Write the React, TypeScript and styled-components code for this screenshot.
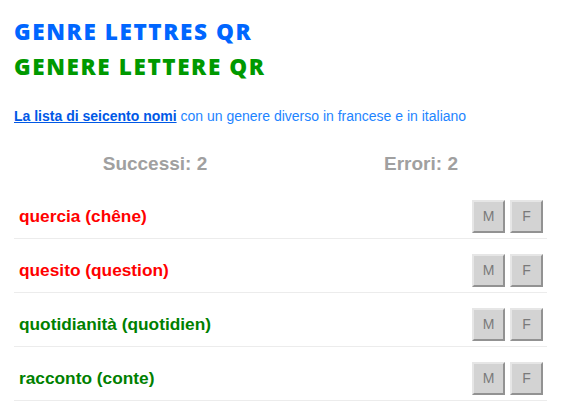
import * as React from "react";
import styled, { createGlobalStyle } from "styled-components";

type Word = { it: string; fr: string; same: boolean };

const words: Word[] = [
  { it: "quercia", fr: "chêne", same: false },
  { it: "quesito", fr: "question", same: false },
  { it: "quotidianità", fr: "quotidien", same: true },
  { it: "racconto", fr: "conte", same: true },
];

const GlobalStyle = createGlobalStyle`
  body {
    margin: 0;
    background: #ffffff;
    font-family: "Liberation Sans", Arial, sans-serif;
  }
`;

const Page = styled.div`
  padding: 14px 21px 0 14px;
`;

const Title = styled.h1<{ $green?: boolean }>`
  margin: 0;
  font-family: "Open Sans", "DejaVu Sans", sans-serif;
  font-weight: 800;
  font-size: 22.5px;
  line-height: 35px;
  letter-spacing: 1.6px;
  color: ${(p) => (p.$green ? "#009900" : "#0066ff")};
`;

const Intro = styled.p`
  margin: 24px 0 0 0;
  font-size: 14px;
  color: #1e84ff;
`;

const IntroLink = styled.a`
  color: #0058e6;
  font-weight: bold;
  text-decoration: underline;
`;

const Stats = styled.div`
  display: grid;
  grid-template-columns: 266px 266px;
  margin: 29px 0 10px 8px;
`;

const Stat = styled.div`
  text-align: center;
  font-size: 19px;
  font-weight: bold;
  color: #a0a0a0;
`;

const List = styled.ul`
  list-style: none;
  margin: 0;
  padding: 0;
`;

const Row = styled.li`
  display: flex;
  align-items: center;
  justify-content: space-between;
  height: 44px;
  padding: 9px 4px 0 5px;
  border-bottom: 1px solid #ececec;
`;

const Label = styled.span<{ $same: boolean }>`
  font-size: 17.3px;
  font-weight: bold;
  color: ${(p) => (p.$same ? "#008000" : "#ff0000")};
`;

const Buttons = styled.div`
  display: flex;
  gap: 5px;
`;

const GenderButton = styled.button`
  width: 33px;
  height: 33px;
  padding: 0;
  background: #d3d3d3;
  border: 2px outset #e6e6e6;
  color: #7a7a7a;
  font-family: "Liberation Sans", Arial, sans-serif;
  font-size: 14px;
`;

export default function App() {
  return (
    <Page>
      <GlobalStyle />
      <Title>GENRE LETTRES QR</Title>
      <Title $green>GENERE LETTERE QR</Title>
      <Intro>
        <IntroLink href="#">La lista di seicento nomi</IntroLink> con un genere diverso in francese e in italiano
      </Intro>
      <Stats>
        <Stat>Successi: 2</Stat>
        <Stat>Errori: 2</Stat>
      </Stats>
      <List>
        {words.map((w) => (
          <Row key={w.it}>
            <Label $same={w.same}>
              {w.it} ({w.fr})
            </Label>
            <Buttons>
              <GenderButton>M</GenderButton>
              <GenderButton>F</GenderButton>
            </Buttons>
          </Row>
        ))}
      </List>
    </Page>
  );
}
